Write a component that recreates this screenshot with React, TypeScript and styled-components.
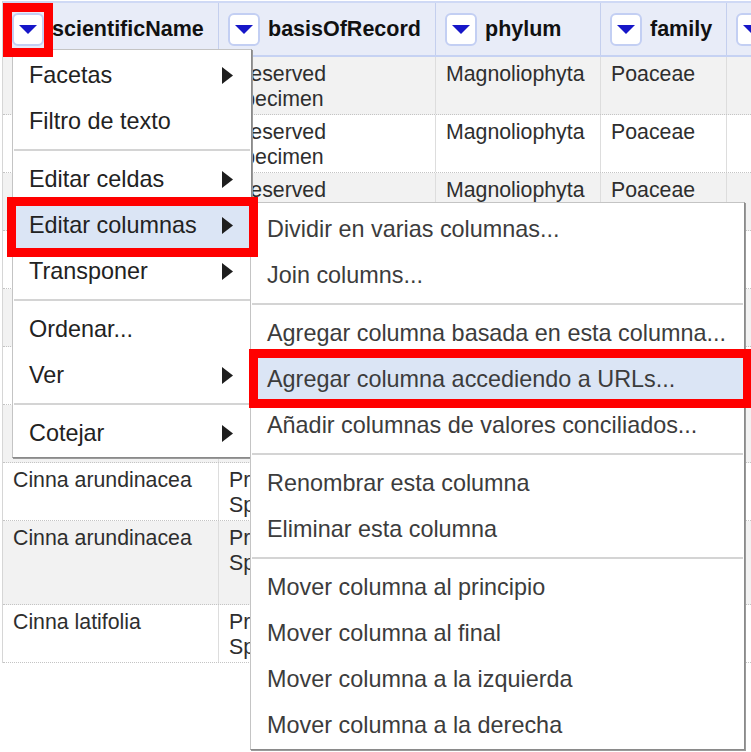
import React from 'react';
import styled, { createGlobalStyle } from 'styled-components';

const Global = createGlobalStyle`
  html, body { margin: 0; padding: 0; background: #ffffff; }
  body { font-family: "Liberation Sans", Arial, sans-serif; }
`;

const COLS = '216px 217px 165px 126px 220px';

const Stage = styled.div`
  position: relative;
  width: 751px;
  height: 752px;
  overflow: hidden;
  background: #ffffff;
  padding: 1px 0 0 2px;
  box-sizing: border-box;
`;

const Table = styled.div`
  display: flex;
  flex-direction: column;
  width: max-content;
  border-left: 1px solid #d6d6d6;
`;

const HeaderRow = styled.div`
  display: grid;
  grid-template-columns: ${COLS};
  height: 56px;
  box-sizing: border-box;
  background: #e8ecf8;
  border-top: 2px solid #cfd9f5;
  border-bottom: 2px solid #c6d2f3;
`;

const HeaderCell = styled.div`
  display: flex;
  align-items: center;
  gap: 8px;
  padding-left: 9px;
  border-right: 1px solid #c4cfee;
  font-weight: bold;
  font-size: 21.5px;
  color: #111111;
  white-space: nowrap;
  overflow: hidden;
`;

const DropButton = styled.div`
  flex: none;
  width: 32px;
  height: 33px;
  box-sizing: border-box;
  border: 2px solid #c3cff3;
  border-radius: 6px;
  background: #ffffff;
  display: flex;
  align-items: center;
  justify-content: center;
`;

const Row = styled.div<{ $alt: boolean; $h: number }>`
  display: grid;
  grid-template-columns: ${COLS};
  height: ${(p) => p.$h}px;
  box-sizing: border-box;
  background: ${(p) => (p.$alt ? '#f2f2f2' : '#ffffff')};
  border-bottom: 1px dotted #c4c4c4;
`;

const Cell = styled.div`
  padding: 5px 12px 0 10px;
  border-right: 1px solid #dddddd;
  font-size: 21.3px;
  line-height: 25px;
  color: #2e2e2e;
  white-space: pre-line;
  overflow: hidden;
`;

const Menu = styled.div<{ $left: number; $top: number; $width: number }>`
  position: absolute;
  left: ${(p) => p.$left}px;
  top: ${(p) => p.$top}px;
  width: ${(p) => p.$width}px;
  box-sizing: border-box;
  background: #ffffff;
  border: 1px solid #c4c4c4;
  border-right-color: #8a8a8a;
  border-bottom-color: #8a8a8a;
  box-shadow: 1px 1px 0 #9a9a9a;
  display: flex;
  flex-direction: column;
`;

const MainMenu = styled(Menu)`
  padding: 2px 0 1px 0;
`;

const SubMenu = styled(Menu)`
  padding: 3px 0 1px 0;
`;

const Item = styled.div<{ $active?: boolean; $sub?: boolean }>`
  height: 46px;
  flex: none;
  display: flex;
  align-items: center;
  justify-content: space-between;
  padding: 0 18px 0 16px;
  font-size: 23.4px;
  color: ${(p) => (p.$sub ? '#3c3c3c' : '#222222')};
  background: ${(p) => (p.$active ? '#dbe5f5' : 'transparent')};
  white-space: nowrap;
`;

const Sep = styled.div`
  height: 12px;
  flex: none;
  display: flex;
  align-items: center;
  padding: 0 1px;
  &::before {
    content: '';
    display: block;
    width: 100%;
    height: 2px;
    background: #d4d4d4;
  }
`;

const Mark = styled.div<{ $x: number; $y: number; $w: number; $h: number }>`
  position: absolute;
  left: ${(p) => p.$x}px;
  top: ${(p) => p.$y}px;
  width: ${(p) => p.$w}px;
  height: ${(p) => p.$h}px;
  box-sizing: border-box;
  border: 9px solid #ff0000;
  pointer-events: none;
`;

const DownTriangle = () => (
  <svg width="18" height="9" viewBox="0 0 18 9">
    <polygon points="0,0 18,0 9,9" fill="#1616c8" />
  </svg>
);

const RightArrow = () => (
  <svg width="11" height="17" viewBox="0 0 11 17">
    <polygon points="0,0 11,8.5 0,17" fill="#1e1e1e" />
  </svg>
);

const headers = ['scientificName', 'basisOfRecord', 'phylum', 'family', ''];

type RowData = { name: string; h: number };
const rows: RowData[] = [
  { name: 'Cinna arundinacea', h: 58 },
  { name: 'Cinna arundinacea', h: 58 },
  { name: 'Cinna latifolia', h: 58 },
  { name: 'Cinna arundinacea', h: 58 },
  { name: 'Cinna latifolia', h: 58 },
  { name: 'Cinna arundinacea', h: 58 },
  { name: 'Cinna latifolia', h: 58 },
  { name: 'Cinna arundinacea', h: 58 },
  { name: 'Cinna arundinacea', h: 84 },
  { name: 'Cinna latifolia', h: 58 },
];

type MenuEntry = { label?: string; arrow?: boolean; active?: boolean; sep?: boolean };

const mainMenu: MenuEntry[] = [
  { label: 'Facetas', arrow: true },
  { label: 'Filtro de texto' },
  { sep: true },
  { label: 'Editar celdas', arrow: true },
  { label: 'Editar columnas', arrow: true, active: true },
  { label: 'Transponer', arrow: true },
  { sep: true },
  { label: 'Ordenar...' },
  { label: 'Ver', arrow: true },
  { sep: true },
  { label: 'Cotejar', arrow: true },
];

const subMenu: MenuEntry[] = [
  { label: 'Dividir en varias columnas...' },
  { label: 'Join columns...' },
  { sep: true },
  { label: 'Agregar columna basada en esta columna...' },
  { label: 'Agregar columna accediendo a URLs...', active: true },
  { label: 'Añadir columnas de valores conciliados...' },
  { sep: true },
  { label: 'Renombrar esta columna' },
  { label: 'Eliminar esta columna' },
  { sep: true },
  { label: 'Mover columna al principio' },
  { label: 'Mover columna al final' },
  { label: 'Mover columna a la izquierda' },
  { label: 'Mover columna a la derecha' },
];

const renderEntries = (entries: MenuEntry[], sub: boolean) =>
  entries.map((e, i) =>
    e.sep ? (
      <Sep key={i} />
    ) : (
      <Item key={i} $active={e.active} $sub={sub}>
        <span>{e.label}</span>
        {e.arrow && <RightArrow />}
      </Item>
    )
  );

export default function App() {
  return (
    <>
      <Global />
      <Stage>
        <Table>
          <HeaderRow>
            {headers.map((h, i) => (
              <HeaderCell key={i}>
                <DropButton>
                  <DownTriangle />
                </DropButton>
                {h && <span>{h}</span>}
              </HeaderCell>
            ))}
          </HeaderRow>
          {rows.map((r, i) => (
            <Row key={i} $alt={i % 2 === 0} $h={r.h}>
              <Cell>{r.name}</Cell>
              <Cell>{'Preserved\nSpecimen'}</Cell>
              <Cell>Magnoliophyta</Cell>
              <Cell>Poaceae</Cell>
              <Cell />
            </Row>
          ))}
        </Table>

        <MainMenu $left={12} $top={49} $width={240}>
          {renderEntries(mainMenu, false)}
        </MainMenu>

        <SubMenu $left={250} $top={202} $width={495}>
          {renderEntries(subMenu, true)}
        </SubMenu>

        <Mark $x={3} $y={3} $w={50} $h={54} />
        <Mark $x={7} $y={197} $w={251} $h={60} />
        <Mark $x={249} $y={349} $w={503} $h={59} />
      </Stage>
    </>
  );
}
